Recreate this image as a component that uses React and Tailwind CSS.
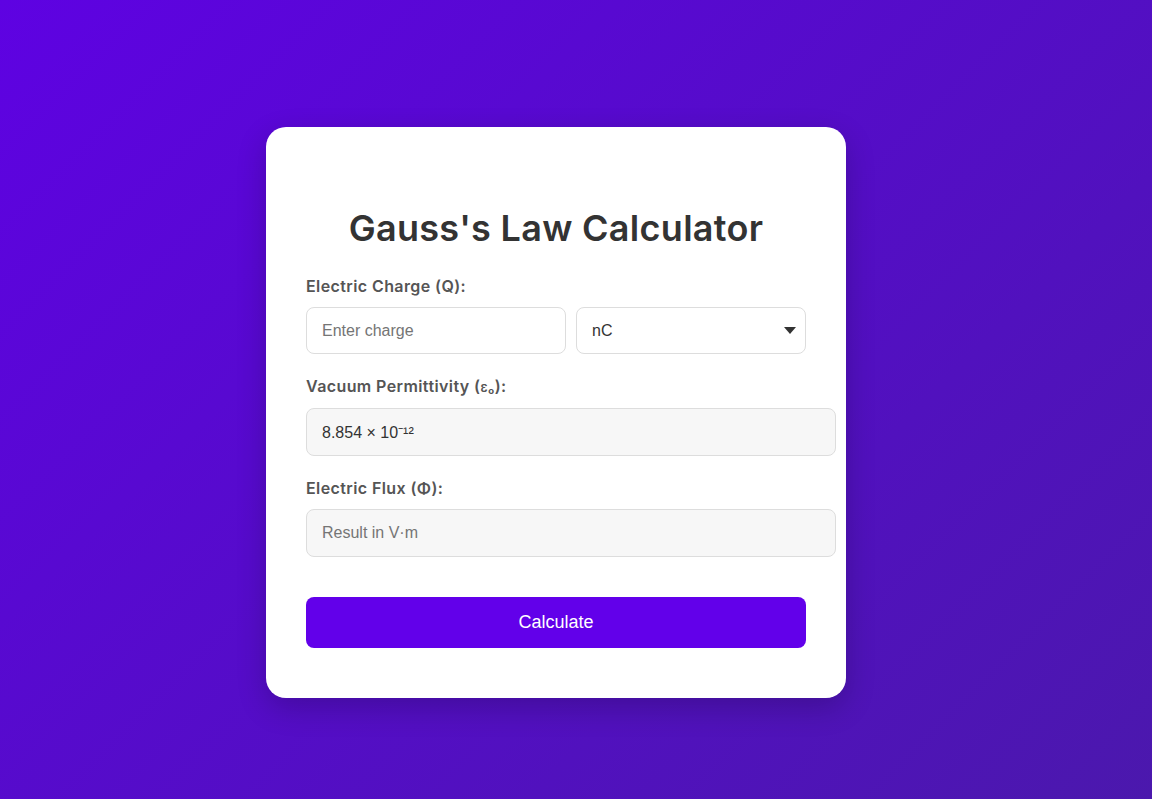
import React, { useState } from "react";

const App = () => {
  const [charge, setCharge] = useState("");
  const [unit, setUnit] = useState("nC");
  const [flux, setFlux] = useState("");

  const calculate = () => {
    const q = parseFloat(charge);
    if (isNaN(q)) return;
    const factor = { C: 1, mC: 1e-3, uC: 1e-6, nC: 1e-9 }[unit];
    setFlux(((q * factor) / 8.854e-12).toExponential(3) + " V·m");
  };

  return (
    <div className="min-h-[799px] w-full bg-[linear-gradient(135deg,#5e02e2,#4b18ad)] flex items-start justify-center pt-[127px] font-['Liberation_Sans',Arial,sans-serif]">
      <div className="w-[580px] h-[571px] mr-[40px] bg-white rounded-[20px] px-[40px] pt-[40px] shadow-[0_10px_30px_rgba(0,0,0,0.2)]">
        {/* Heading */}
        <h1 className="mt-[34px] h-[54px] leading-[54px] text-center text-[36px] font-semibold text-[#333] tracking-[0.3px] font-['Inter',sans-serif]">
          Gauss's Law Calculator
        </h1>

        {/* Charge */}
        <label className="block mt-[20px] text-[16px] leading-[22px] font-semibold text-[#555] tracking-[0.4px] font-['Inter',sans-serif]">
          Electric Charge (Q):
        </label>
        <div className="flex gap-[10px] mt-[10px]">
          <input
            type="text"
            placeholder="Enter charge"
            value={charge}
            onChange={(e) => setCharge(e.target.value)}
            className="w-[260px] h-[47px] px-[15px] text-[16px] text-[#333] border border-[#ddd] rounded-[8px] outline-none placeholder:text-[#757575]"
          />
          <div className="relative w-[230px] h-[47px]">
            <select
              value={unit}
              onChange={(e) => setUnit(e.target.value)}
              className="appearance-none w-full h-full px-[15px] text-[16px] text-[#333] bg-white border border-[#ddd] rounded-[8px] outline-none"
            >
              <option value="C">C</option>
              <option value="mC">mC</option>
              <option value="uC">μC</option>
              <option value="nC">nC</option>
            </select>
            <svg
              className="absolute right-[10px] top-[20px] pointer-events-none"
              width="12"
              height="7"
              viewBox="0 0 12 7"
            >
              <path d="M0 0 L12 0 L6 7 Z" fill="#333" />
            </svg>
          </div>
        </div>

        {/* Permittivity */}
        <label className="block mt-[21px] text-[16px] leading-[22px] font-semibold text-[#555] tracking-[0.4px] font-['Inter',sans-serif]">
          Vacuum Permittivity (<span className="text-[13px]">ε₀</span>):
        </label>
        <input
          type="text"
          readOnly
          value="8.854 × 10⁻¹²"
          className="block mt-[10px] w-[530px] h-[48px] px-[15px] text-[16px] text-[#333] bg-[#f7f7f7] border border-[#ddd] rounded-[8px] outline-none"
        />

        {/* Flux */}
        <label className="block mt-[21px] text-[16px] leading-[22px] font-semibold text-[#555] tracking-[0.4px] font-['Inter',sans-serif]">
          Electric Flux (Φ):
        </label>
        <input
          type="text"
          readOnly
          placeholder="Result in V·m"
          value={flux}
          className="block mt-[10px] w-[530px] h-[48px] px-[15px] text-[16px] text-[#333] bg-[#f7f7f7] border border-[#ddd] rounded-[8px] outline-none placeholder:text-[#757575]"
        />

        <button
          onClick={calculate}
          className="block mt-[40px] w-[500px] h-[51px] bg-[#6200ea] text-white text-[18px] rounded-[8px] cursor-pointer"
        >
          Calculate
        </button>
      </div>
    </div>
  );
};

export default App;
